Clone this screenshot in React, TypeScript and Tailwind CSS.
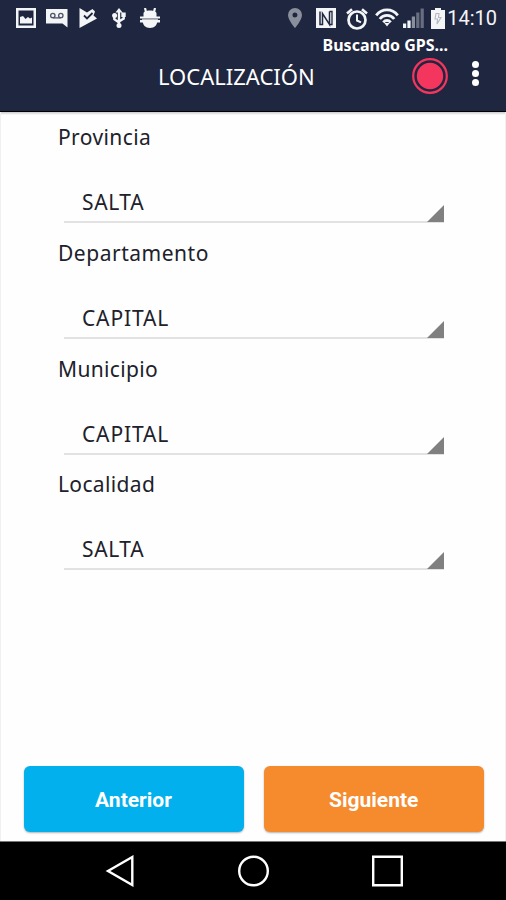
import React from "react";

const fields = [
  { label: "Provincia", value: "SALTA", labelTracking: "tracking-[0.4px]", valueTracking: "tracking-[0.6px]" },
  { label: "Departamento", value: "CAPITAL", labelTracking: "tracking-[0.52px]", valueTracking: "tracking-[0.85px]" },
  { label: "Municipio", value: "CAPITAL", labelTracking: "tracking-[0.35px]", valueTracking: "tracking-[0.85px]" },
  { label: "Localidad", value: "SALTA", labelTracking: "tracking-[0.35px]", valueTracking: "tracking-[0.6px]" },
];

const StatusBar = () => {
  return (
    <div className="flex h-[36px] items-center pl-4 pr-[9px] text-[#f4f5f7]">
      {/* picture */}
      <svg className="h-5 w-5 shrink-0" viewBox="0 0 20 20">
        <path fill="currentColor" fillRule="evenodd" d="M0 0h20v20H0zM2.5 2.5v15h15v-15z" />
        <path fill="currentColor" d="M4 15.500V9l3-1 2.500 3 2.500-2 2 1.500 2-1v6z" />
      </svg>
      {/* voicemail */}
      <svg className="ml-[10px] h-5 w-[22px] shrink-0" viewBox="0 0 22 20">
        <path fill="currentColor" d="M0 1h21.500v18.500L16.500 15.500H0z" />
        <g fill="none" stroke="#4d5368" strokeWidth="1.3">
          <circle cx="6.8" cy="7.5" r="2.2" />
          <circle cx="14.8" cy="7.5" r="2.2" />
          <path d="M6.8 9.900h8" />
        </g>
      </svg>
      {/* play + check */}
      <svg className="ml-[11px] h-5 w-[19px] shrink-0" viewBox="0 0 19 20">
        <path fill="currentColor" d="M.5 0L8 4.500 13.500 1l2.500 2.500-1.500 4L18 10.500.5 20z" />
        <path fill="none" stroke="#1f2640" strokeWidth="1.800" d="M5 7.500l3 3L13.500 5" />
      </svg>
      {/* usb */}
      <svg className="ml-[14px] h-5 w-[14px] shrink-0" viewBox="0 0 14 20">
        <g fill="none" stroke="currentColor" strokeWidth="2.400">
          <path d="M7 3v14M2.300 8v3.200L7 14.500M11.700 7v3.500L7 13.500" />
        </g>
        <g fill="currentColor">
          <path d="M3.400 4.500L7 0l3.600 4.500zM9.300 4.500h4.400V9H9.300z" />
          <circle cx="2.600" cy="7.5" r="2.500" />
          <circle cx="7" cy="17.500" r="2.500" />
        </g>
      </svg>
      {/* debug */}
      <svg className="ml-[14px] h-5 w-5 shrink-0" viewBox="0 0 20 20">
        <path d="M5 0l1 4M15 0l-1 4" stroke="currentColor" strokeWidth="2.200" />
        <g fill="currentColor">
          <path d="M3.500 9V5.500C3.500 3.500 6 2.500 10 2.500s6.500 1 6.500 3V9zM2.500 12h15c0 5-3 8-7.500 8s-7.500-3-7.500-8z" />
          <path d="M0 8.500h20v2H0zM0 12h20v2.500H0z" />
          <path fill="#b4b7bf" d="M2 10.500h16V12H2z" />
        </g>
      </svg>

      {/* gps pin */}
      <svg className="ml-auto h-5 w-[14px] shrink-0 text-[#8a8f9c]" viewBox="0 0 14 20">
        <path fill="currentColor" fillRule="evenodd" d="M7 0a7 7 0 017 7c0 5-7 13-7 13S0 12 0 7a7 7 0 017-7zm0 4.500a2.500 2.500 0 100 5 2.500 2.500 0 000-5z" />
      </svg>
      {/* nfc */}
      <svg className="ml-[14px] h-5 w-5 shrink-0" viewBox="0 0 20 20">
        <path fill="currentColor" d="M0 0h20v20H0z" />
        <path fill="none" stroke="#1f2640" strokeWidth="1.500" d="M4 3.500v13h2.500V5.500l7 11V3.500" />
        <path fill="none" stroke="#1f2640" strokeWidth="1.300" d="M13.500 3.500H16v13h-2.500" />
      </svg>
      {/* alarm */}
      <svg className="ml-[10px] mt-px h-[22px] w-[22px] shrink-0" viewBox="0 0 22 22" fill="none" stroke="currentColor">
        <circle cx="11" cy="12" r="8.500" strokeWidth="2.700" />
        <path strokeWidth="2.600" d="M1 5.500L6 1.200M21 5.500L16 1.200" />
        <path strokeWidth="2" d="M11 6.500V12.500l4 1.800" />
      </svg>
      {/* wifi */}
      <svg className="ml-[7px] h-5 w-6 shrink-0" viewBox="0 0 24 20" fill="none" stroke="currentColor" strokeWidth="2.800">
        <path d="M1.200 7.300C7 .1 17 .1 22.800 7.300M4.800 11c3.800-4.800 10.600-4.800 14.400 0M8.300 14.300c2-2.400 5.400-2.400 7.400 0" />
        <path d="M9.300 15h5.400L12 18.500z" fill="currentColor" stroke="none" />
      </svg>
      {/* signal */}
      <svg className="ml-1 h-5 w-[21px] shrink-0" viewBox="0 0 21 20">
        <path fill="currentColor" d="M0 15.500h3.200V20H0zM4.400 12.500h3.200V20H4.400z" />
        <path fill="#8a8f9c" d="M8.800 8.500H12V20H8.800z" />
        <path fill="#686e80" d="M13.200 4.500h3.200V20h-3.200zM17.600.5h3.200V20h-3.200z" />
      </svg>
      {/* battery */}
      <svg className="ml-[7px] h-[21px] w-[14px] shrink-0" viewBox="0 0 14 21">
        <path fill="currentColor" d="M4 0h6v2h4v19H0V2h4z" />
        <path fill="none" stroke="#b4b7bf" strokeWidth="1.100" d="M8 5.500H5L4 11h2.500L6 16l4-6.500H7.500z" />
      </svg>
      <span className="ml-[2px] font-['Roboto',sans-serif] text-[20px] leading-none">14:10</span>
    </div>
  );
};

const Header = () => {
  return (
    <header className="h-28 border-b border-black bg-[#1f2640]">
      <StatusBar />
      <div className="flex h-[75px] pl-[158px] text-white">
        <h1 className="mt-[25px] w-[164px] whitespace-nowrap text-[22px] leading-[30px]">LOCALIZACIÓN</h1>
        <div className="flex w-[126px] flex-col items-end">
          <p className="whitespace-nowrap text-[16px] leading-[18px] font-bold">Buscando GPS...</p>
          <svg className="mt-[4px] h-9 w-9" viewBox="0 0 36 36">
            <circle cx="18" cy="18" r="16.800" fill="none" stroke="#f4365f" strokeWidth="2.200" />
            <circle cx="18" cy="18" r="13.200" fill="#f4365f" />
          </svg>
        </div>
        <div className="ml-[24px] mt-[25px] flex flex-col gap-[2px]">
          <span className="size-[7px] rounded-full bg-white" />
          <span className="size-[7px] rounded-full bg-white" />
          <span className="size-[7px] rounded-full bg-white" />
        </div>
      </div>
    </header>
  );
};

const NavBar = () => {
  return (
    <nav className="h-[59px] border-t border-[#777] bg-black">
      <div className="flex h-[58px] items-center pl-[104px]">
        {/* back */}
        <svg className="h-8 w-8" viewBox="0 0 32 32" fill="none" stroke="white" strokeWidth="2.400">
          <path d="M28.300 2L4 16l24.300 14z" />
        </svg>
        {/* home */}
        <svg className="ml-[101px] h-8 w-8" viewBox="0 0 32 32" fill="none" stroke="white" strokeWidth="2.400">
          <circle cx="16.500" cy="16" r="14.300" />
        </svg>
        {/* recents */}
        <svg className="ml-[102px] h-8 w-8" viewBox="0 0 32 32" fill="none" stroke="white" strokeWidth="2.400">
          <path d="M2.200 1.700h28.600v28.600H2.200z" />
        </svg>
      </div>
    </nav>
  );
};

export default function App() {
  return (
    <div className="flex h-[900px] w-[506px] flex-col overflow-hidden bg-white font-['Noto_Sans',sans-serif]">
      <Header />
      <main className="flex flex-1 flex-col border-x border-[#f0f0f0] bg-[#fefefe]">
        <div className="h-[3px] bg-linear-to-b from-[#c9c9c9] to-[#fefefe]" />
        <div className="pl-[57px] pr-[61px]">
          {fields.map((field, i) => (
            <div key={i} className="h-[115.8px] text-[#20212b]">
              <p className={`pt-[7px] text-[21px] leading-[30px] ${field.labelTracking}`}>{field.label}</p>
              <button className="ml-[6px] mt-[35px] flex h-[36px] w-[380px] items-start justify-between border-b-2 border-[#e2e2e2] pl-[18px]">
                <span className={`text-[21px] leading-[30px] ${field.valueTracking}`}>{field.value}</span>
                <svg className="mt-[18px] h-[17px] w-[17px] shrink-0" viewBox="0 0 17 17">
                  <path fill="#808080" d="M17 0v17H0z" />
                </svg>
              </button>
            </div>
          ))}
        </div>
        <div className="mb-[9px] mt-auto flex gap-5 pl-[22.5px] font-['Roboto',sans-serif] text-[21px] font-bold text-white">
          <button className="h-[66px] w-[220px] rounded-md bg-[#03b0ee] pt-[3px] shadow-[0_1px_2px_rgba(0,0,0,0.3)]">
            Anterior
          </button>
          <button className="h-[66px] w-[220.5px] rounded-md bg-[#f68b2e] pt-[3px] shadow-[0_1px_2px_rgba(0,0,0,0.3)]">
            Siguiente
          </button>
        </div>
      </main>
      <NavBar />
    </div>
  );
}
